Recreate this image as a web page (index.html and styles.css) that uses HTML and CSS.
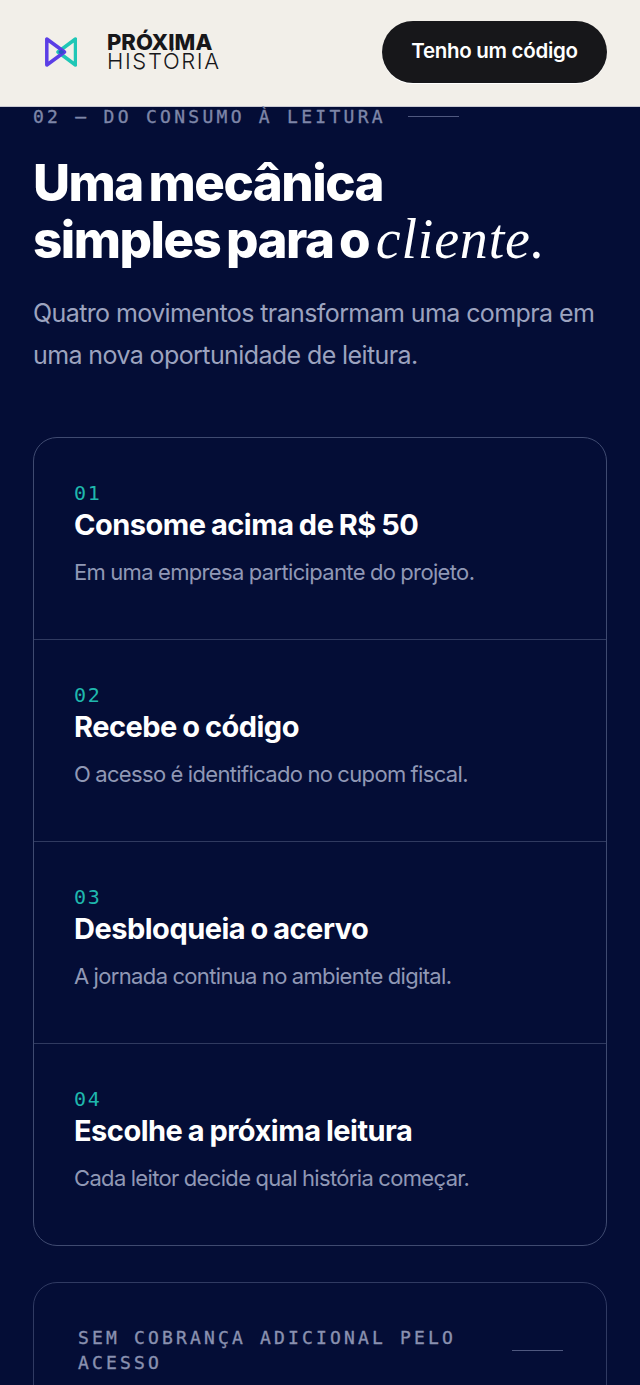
FILE: index.html
```html
<!DOCTYPE html>
<html lang="pt-BR">
<head>
<meta charset="utf-8">
<title>Próxima História</title>
<link rel="stylesheet" href="styles.css">
</head>
<body>
<header class="topbar">
  <div class="brand">
    <svg class="brand-mark" viewBox="0 0 32 30" width="32" height="30" aria-hidden="true">
      <path d="M30.500 2 L30.500 28 L13 15 Z" fill="none" stroke="#1fc7b6" stroke-width="3.500" stroke-linejoin="round"/>
      <path d="M1.800 2 L1.800 28 L19.500 15 Z" fill="none" stroke="#5b3ee6" stroke-width="3.500" stroke-linejoin="round"/>
      <path d="M13 15 L16.300 12.500 L19.500 15 L16.300 17.500 Z" fill="#2a52c9"/>
    </svg>
    <div class="brand-name"><strong>PRÓXIMA</strong><span>HISTÓRIA</span></div>
  </div>
  <a class="code-btn">Tenho um código</a>
</header>
<main class="section">
  <div class="eyebrow"><span>02 — DO CONSUMO À LEITURA</span><i class="rule"></i></div>
  <h1 class="title">Uma mecânica<br>simples para o <em>cliente.</em></h1>
  <p class="lead">Quatro movimentos transformam uma compra em uma nova oportunidade de leitura.</p>
  <ol class="steps">
    <li class="step"><span class="num">01</span><h2>Consome acima de R$ 50</h2><p>Em uma empresa participante do projeto.</p></li>
    <li class="step"><span class="num">02</span><h2>Recebe o código</h2><p>O acesso é identificado no cupom fiscal.</p></li>
    <li class="step"><span class="num">03</span><h2>Desbloqueia o acervo</h2><p>A jornada continua no ambiente digital.</p></li>
    <li class="step"><span class="num">04</span><h2>Escolhe a próxima leitura</h2><p>Cada leitor decide qual história começar.</p></li>
  </ol>
  <div class="note"><span>SEM COBRANÇA ADICIONAL PELO ACESSO</span><i class="rule"></i></div>
</main>
</body>
</html>
```
FILE: styles.css
```css
* { box-sizing: border-box; }
html, body { margin: 0; height: 1385px; overflow: hidden; }
body { background: #040d36; font-family: Inter, "Liberation Sans", sans-serif; color: #fff; }

.topbar { height: 107px; background: #f2efe9; border-bottom: 1px solid #c9c9d2; padding: 21px 33px 0 45px; display: flex; justify-content: space-between; align-items: flex-start; }
.brand { display: flex; align-items: center; gap: 30px; height: 62px; }
.brand-mark { display: block; }
.brand-name { display: flex; flex-direction: column; color: #17171a; font-size: 22px; line-height: 19px; }
.brand-name strong { font-weight: 800; }
.brand-name span { font-weight: 300; letter-spacing: 1.650px; }
.code-btn { width: 225px; height: 62px; padding-bottom: 3px; border-radius: 31px; background: #17171a; color: #fff; display: flex; align-items: center; justify-content: center; font-size: 20.500px; font-weight: 600; letter-spacing: -0.300px; box-shadow: 0 1px 0 #fff; }

.section { padding: 0 33px; }
.eyebrow { display: flex; align-items: center; gap: 22px; height: 18px; font-family: "DejaVu Sans Mono", monospace; font-size: 18px; letter-spacing: 3.280px; color: #7e86a8; -webkit-text-stroke: 0.35px #7e86a8; }
.rule { display: block; flex: none; width: 51px; height: 1px; background: #4f587f; }
.title { margin: 30px 0 0; font-size: 51px; line-height: 56px; font-weight: 800; letter-spacing: -1.500px; word-spacing: -4px; }
.title em { margin-left: 1px; font-family: "Liberation Serif", serif; font-style: italic; font-weight: 400; line-height: 1; letter-spacing: 0.800px; word-spacing: 0; font-size: 56px; }
.lead { margin: 24px 0 0; font-size: 25px; line-height: 42px; letter-spacing: -0.600px; color: #9ca3bf; }

.steps { list-style: none; margin: 61px 0 0; padding: 0; border: 1px solid #3f4a70; border-radius: 24px; }
.step { height: 202px; padding: 43px 40px 0; border-top: 1px solid #303a60; }
.step:first-child { height: 201px; border-top: 0; }
.num { display: block; font-family: "DejaVu Sans Mono", monospace; font-size: 20px; line-height: 24px; color: #1fb7ad; letter-spacing: 1.600px; }
.step h2 { margin: 0; font-size: 29px; line-height: 40px; font-weight: 700; letter-spacing: -0.500px; word-spacing: -1px; }
.step p { margin: 11px 0 0; font-size: 22px; line-height: 32px; letter-spacing: -0.650px; word-spacing: -0.500px; color: #9098b5; }

.note { margin-top: 36px; border: 1px solid #303a62; border-radius: 24px; padding: 42px 43px 0 44px; height: 140px; display: flex; justify-content: space-between; align-items: flex-start; gap: 48px; }
.note span { font-family: "DejaVu Sans Mono", monospace; font-size: 18px; line-height: 25px; letter-spacing: 3.160px; color: #8a91b0; -webkit-text-stroke: 0.35px #8a91b0; }
.note .rule { margin-top: 25px; }
```
